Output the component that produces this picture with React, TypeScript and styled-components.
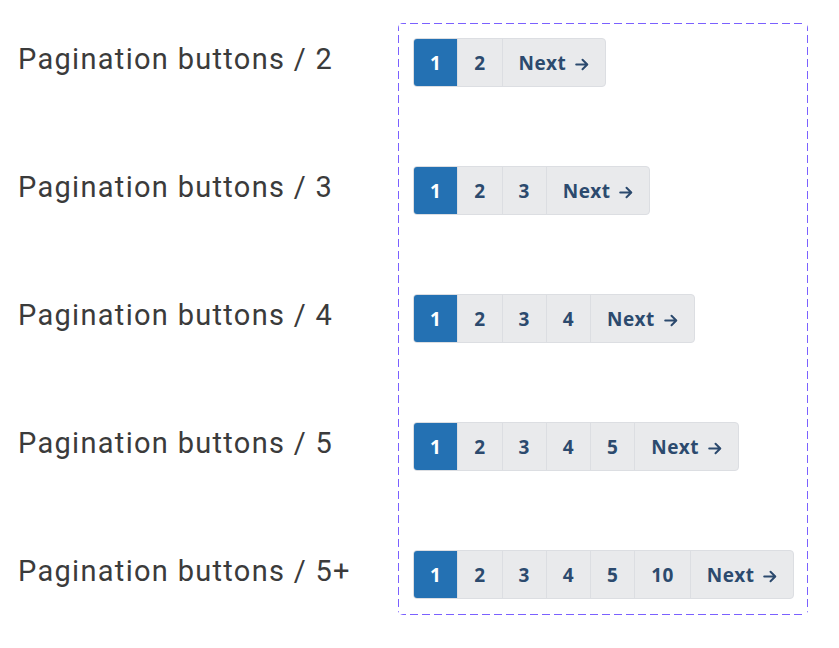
import styled, { createGlobalStyle } from 'styled-components';

const GlobalStyle = createGlobalStyle`
    html, body {
        margin: 0;
        padding: 0;
        background: #ffffff;
    }
    * {
        box-sizing: border-box;
    }
`;

const Page = styled.div`
    display: flex;
    align-items: flex-start;
    padding: 23px 0 0 18px;
`;

const LabelColumn = styled.div`
    display: flex;
    flex-flow: column nowrap;
    gap: 79px;
    width: 380px;
    padding-top: 15px;
`;

const Label = styled.div`
    height: 49px;
    line-height: 43px;
    font-family: Roboto, 'Noto Sans', sans-serif;
    font-size: 29px;
    letter-spacing: 1.3px;
    color: #3b3b3b;
    white-space: nowrap;
`;

// long figma-like dashes: 8px dash, 4px gap
const dash = '#7b61ff';
const Frame = styled.div`
    display: flex;
    flex-flow: column nowrap;
    gap: 79px;
    padding: 15px 14px 16px 15px;
    border-radius: 5px;
    background:
        linear-gradient(90deg, ${dash} 8px, transparent 8px) top left / 12px 1px repeat-x,
        linear-gradient(90deg, ${dash} 8px, transparent 8px) bottom left / 12px 1px repeat-x,
        linear-gradient(180deg, ${dash} 8px, transparent 8px) top left / 1px 12px repeat-y,
        linear-gradient(180deg, ${dash} 8px, transparent 8px) top right / 1px 12px repeat-y;
`;

const Group = styled.nav`
    display: flex;
    align-self: flex-start;
    height: 49px;
    border: 1px solid #dcdee2;
    border-radius: 4px;
    background: #e9eaec;
    overflow: hidden;
`;

const PageButton = styled.button<{ $active?: boolean }>`
    display: flex;
    align-items: center;
    justify-content: center;
    gap: 9px;
    min-width: 44px;
    height: 100%;
    margin: 0;
    padding: 1px 16px 0;
    border: none;
    border-left: 1px solid #dcdee2;
    background: ${(p) => (p.$active ? '#2471b3' : 'transparent')};
    color: ${(p) => (p.$active ? '#ffffff' : '#2c4a6e')};
    font-family: 'Open Sans', 'Noto Sans', sans-serif;
    font-weight: 700;
    font-size: 19px;
    letter-spacing: 0.4px;
    cursor: pointer;

    &:first-child {
        border-left: none;
        min-width: 43px;
    }
`;

const ArrowIcon = styled.svg`
    margin-top: 3px;
    flex: none;
`;

const Arrow = () => (
    <ArrowIcon width="14" height="13" viewBox="0 0 14 13" fill="none">
        <path
            d="M1.2 6.5h11M7.5 1.7l4.8 4.8-4.8 4.8"
            stroke="#2c4a6e"
            strokeWidth="2"
            strokeLinecap="round"
            strokeLinejoin="round"
        />
    </ArrowIcon>
);

type PaginationProps = {
    pages: number[];
};

function Pagination({ pages }: PaginationProps) {
    return (
        <Group>
            {pages.map((n, i) => (
                <PageButton key={n} $active={i === 0}>
                    {n}
                </PageButton>
            ))}
            <PageButton>
                Next
                <Arrow />
            </PageButton>
        </Group>
    );
}

const variants = [
    { label: '2', pages: [1, 2] },
    { label: '3', pages: [1, 2, 3] },
    { label: '4', pages: [1, 2, 3, 4] },
    { label: '5', pages: [1, 2, 3, 4, 5] },
    { label: '5+', pages: [1, 2, 3, 4, 5, 10] },
];

export default function App() {
    return (
        <>
            <GlobalStyle />
            <Page>
                <LabelColumn>
                    {variants.map((v) => (
                        <Label key={v.label}>Pagination buttons / {v.label}</Label>
                    ))}
                </LabelColumn>
                <Frame>
                    {variants.map((v) => (
                        <Pagination key={v.label} pages={v.pages} />
                    ))}
                </Frame>
            </Page>
        </>
    );
}
